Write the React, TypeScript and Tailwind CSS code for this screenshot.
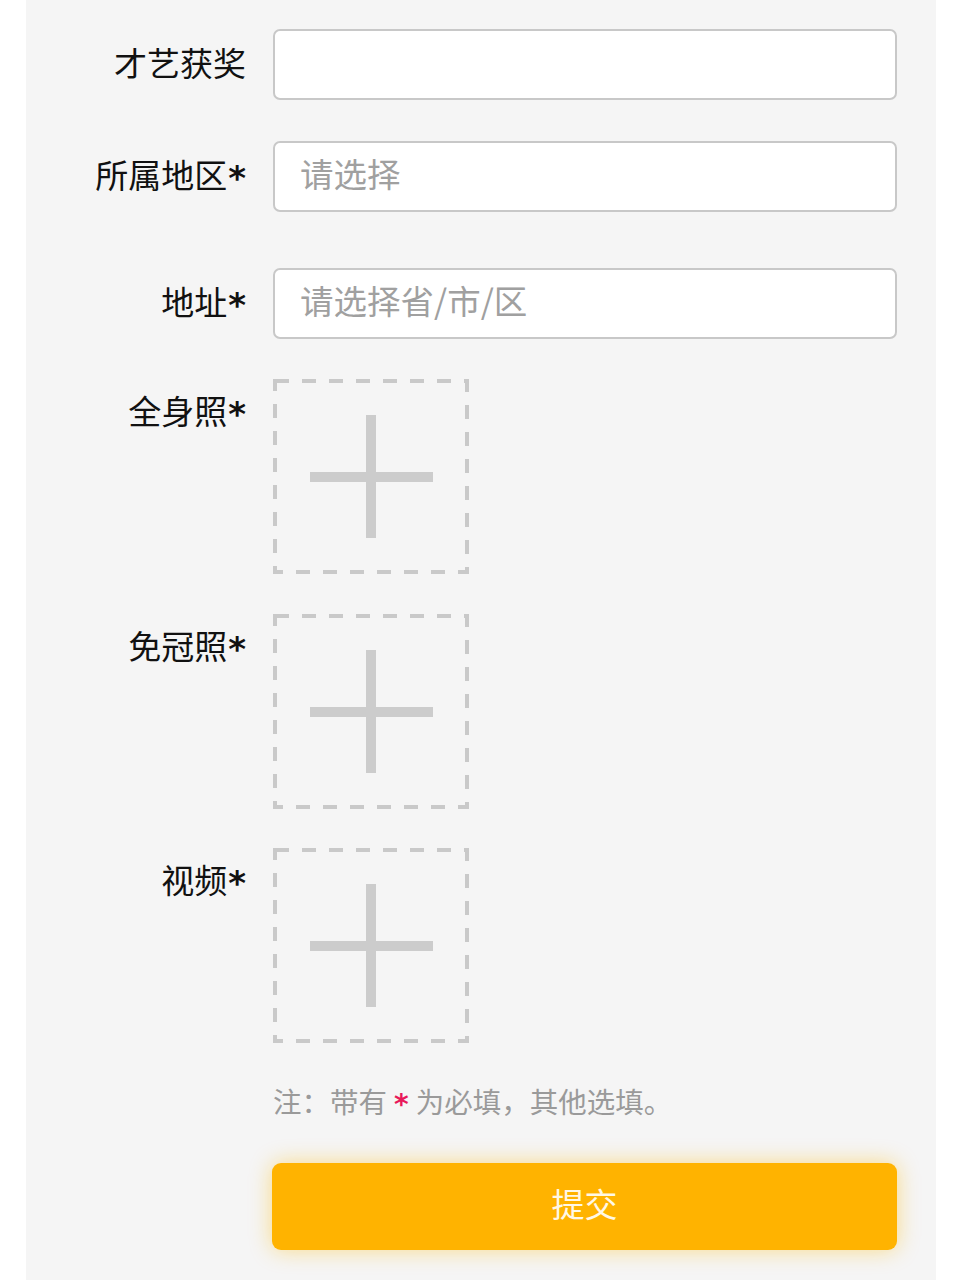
import React from 'react';

const FONT = { fontFamily: '"Noto Sans CJK SC", "Noto Sans", sans-serif' };

// splits a trailing * so it can be drawn as the heavier centred asterisk of the design
function Label({ text }: { text: string }) {
  const req = text.endsWith('*');
  const base = req ? text.slice(0, -1) : text;
  return (
    <>
      {base}
      {req && (
        <span className="relative top-[2px] ml-[1px] font-['DejaVu_Sans'] text-[34px] leading-none font-bold">*</span>
      )}
    </>
  );
}

function TextRow({ label, placeholder, className }: { label: string; placeholder?: string; className?: string }) {
  return (
    <div className={`flex items-center ${className ?? ''}`}>
      <label className="w-[220px] shrink-0 -translate-y-[3px] text-right text-[33px] leading-[40px] text-[#111]">
        <Label text={label} />
      </label>
      <div className="ml-[27px] flex h-[71px] w-[624px] items-center rounded-[7px] border-2 border-[#c8c8c8] bg-white px-[25px]">
        <input
          className="w-full -translate-y-[3px] bg-transparent text-[33.5px] text-[#333] outline-none placeholder:text-[#a0a0a0]"
          placeholder={placeholder}
        />
      </div>
    </div>
  );
}

function UploadBox() {
  return (
    <button className="block h-[195px] w-[196px] shrink-0">
      <svg width="196" height="195" viewBox="0 0 196 195">
        <rect x="2" y="2" width="192" height="191" fill="none" stroke="#c9c9c9" strokeWidth="4" strokeDasharray="14 13" />
        <rect x="93" y="36" width="10" height="123" fill="#cccccc" />
        <rect x="37" y="93" width="123" height="10" fill="#cccccc" />
      </svg>
    </button>
  );
}

function UploadRow({ label, className }: { label: string; className?: string }) {
  return (
    <div className={`flex items-start ${className ?? ''}`}>
      <label className="w-[220px] shrink-0 pt-[11px] text-right text-[33px] leading-[40px] text-[#111]">
        <Label text={label} />
      </label>
      <div className="ml-[27px]">
        <UploadBox />
      </div>
    </div>
  );
}

export default function App() {
  return (
    <div className="min-h-[1280px] bg-white" style={FONT}>
      <div className="ml-[26px] flex min-h-[1280px] w-[910px] flex-col bg-[#f5f5f5] pt-[29px]">
        <TextRow label="才艺获奖" />
        <TextRow label="所属地区*" placeholder="请选择" className="mt-[41px]" />
        <TextRow label="地址*" placeholder="请选择省/市/区" className="mt-[56px]" />
        <UploadRow label="全身照*" className="mt-[40px]" />
        <UploadRow label="免冠照*" className="mt-[40px]" />
        <UploadRow label="视频*" className="mt-[39px]" />

        <p className="ml-[247px] mt-[38px] text-[28.5px] leading-[40px] text-[#9a9a9a]">
          注：带有
          <span className="relative top-[1px] mx-[7px] font-['DejaVu_Sans'] text-[28px] leading-none font-bold text-[#e8195a]">*</span>
          为必填，其他选填。
        </p>

        <button className="ml-[246px] mt-[42px] h-[87px] w-[625px] rounded-[9px] bg-[#ffb300] pb-[5px] text-[33px] text-[#fff8e6] shadow-[0_0_22px_rgba(255,186,0,0.45)]">
          提交
        </button>
      </div>
    </div>
  );
}
